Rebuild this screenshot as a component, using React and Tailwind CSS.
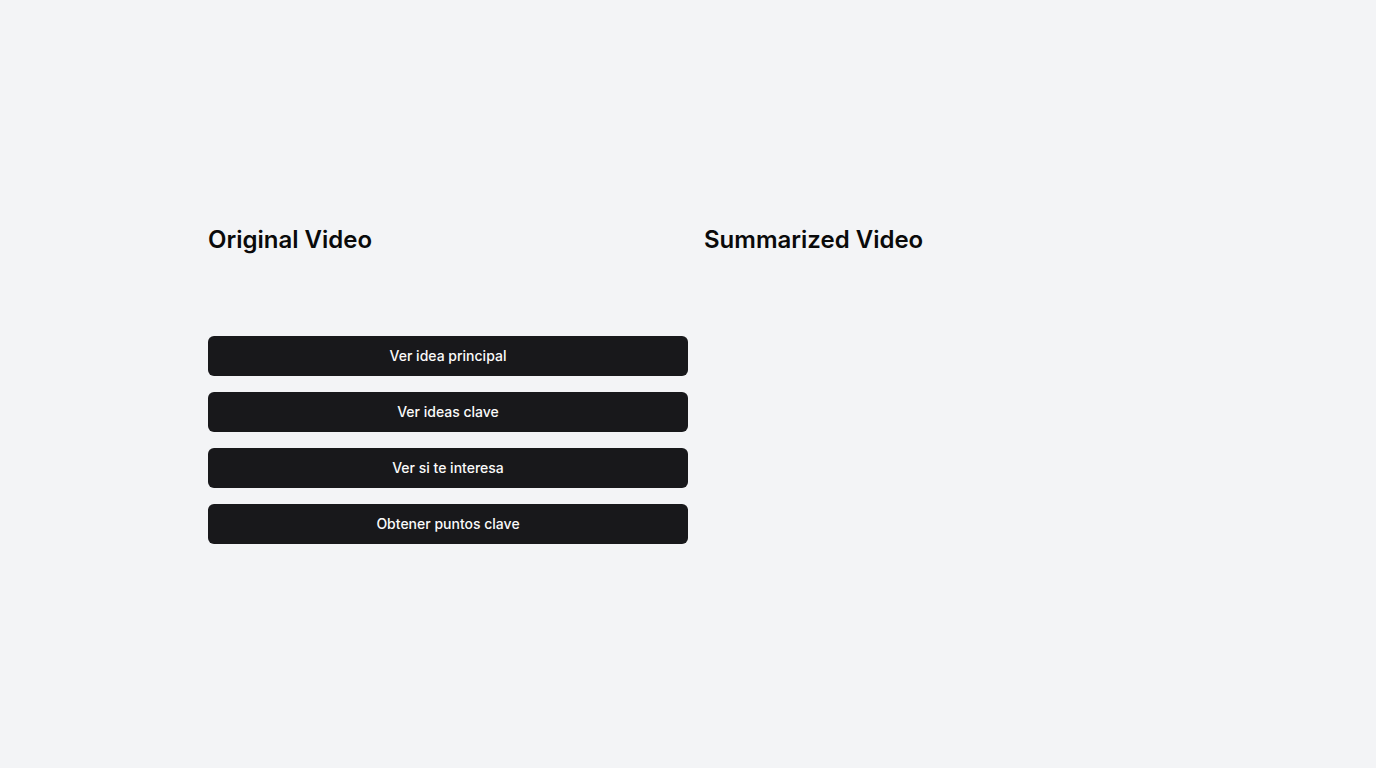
import React from 'react';

const actions = ['Ver idea principal', 'Ver ideas clave', 'Ver si te interesa', 'Obtener puntos clave'];

export default function App() {
  return (
    <div className="min-h-screen w-full bg-[#f3f4f6] flex items-center justify-center font-['Inter',sans-serif]">
      <div className="w-[960px] flex gap-4">
        {/* Left column */}
        <div className="w-[480px] flex flex-col">
          <h2 className="text-2xl leading-8 font-semibold text-[#0a0a0a]">Original Video</h2>
          <div className="h-20" />
          <div className="flex flex-col gap-4">
            {actions.map((label) => (
              <button
                key={label}
                className="h-10 w-full rounded-md bg-[#18181b] text-[#fafafa] text-sm font-medium"
              >
                {label}
              </button>
            ))}
          </div>
        </div>

        {/* Right column */}
        <div className="flex-1 flex flex-col">
          <h2 className="text-2xl leading-8 font-semibold text-[#0a0a0a]">Summarized Video</h2>
        </div>
      </div>
    </div>
  );
}
